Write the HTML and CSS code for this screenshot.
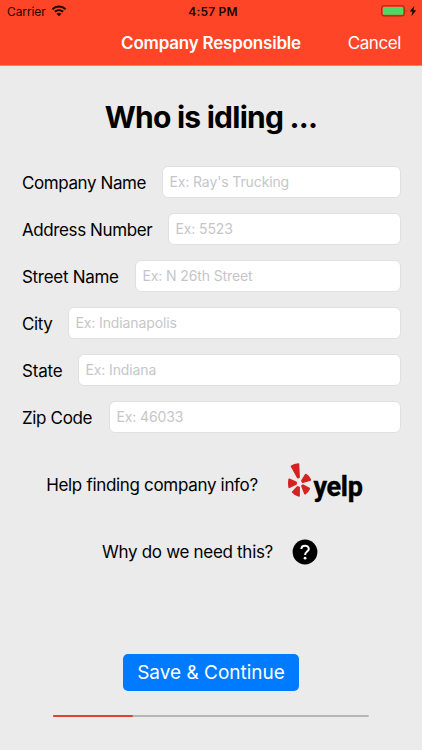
FILE: index.html
```html
<!DOCTYPE html>
<html lang="en">
<head>
    <meta charset="UTF-8">
    <meta name="viewport" content="width=device-width, initial-scale=1.0">
    <title>Company Responsible</title>
    <link rel="stylesheet" href="styles.css">
</head>
<body>
    <header class="top">
        <div class="status-bar">
            <div class="status-left">
                <span class="carrier">Carrier</span>
                <svg class="wifi" width="16" height="12" viewBox="0 0 16 12">
                    <path d="M1.4 4.2C5.2 0.6 10.8 0.6 14.6 4.2" fill="none" stroke="#1c0500" stroke-width="2.1"/>
                    <path d="M3.8 6.8C6.2 4.7 9.8 4.7 12.2 6.8" fill="none" stroke="#1c0500" stroke-width="2"/>
                    <path d="M5.5 8.7C7 7.4 9 7.4 10.5 8.7L8 11.2Z" fill="#1c0500"/>
                </svg>
            </div>
            <span class="time">4:57 PM</span>
            <div class="status-right">
                <svg width="36" height="12" viewBox="0 0 36 12">
                    <rect x="0.7" y="0.7" width="22.6" height="10.2" rx="2.4" fill="none" stroke="#a12d12" stroke-width="1.1"/>
                    <rect x="1.9" y="1.9" width="20.2" height="7.8" rx="1.2" fill="#4cd964"/>
                    <path d="M24.8 4Q26.2 5.8 24.8 7.6Z" fill="#a12d12"/>
                    <path d="M33.4 0.7L28.8 6.4H31.4L30.4 11.2L35.2 5.2H32.4Z" fill="#1c0500"/>
                </svg>
            </div>
        </div>
        <div class="nav-bar">
            <span class="nav-title">Company Responsible</span>
            <span class="nav-cancel">Cancel</span>
        </div>
    </header>

    <main class="content">
        <h1>Who is idling ...</h1>

        <form class="company-form">
            <div class="row">
                <label class="label-company" for="company">Company Name</label>
                <input id="company" type="text" placeholder="Ex: Ray's Trucking">
            </div>
            <div class="row">
                <label class="label-address" for="address">Address Number</label>
                <input id="address" type="text" placeholder="Ex: 5523">
            </div>
            <div class="row">
                <label class="label-street" for="street">Street Name</label>
                <input id="street" type="text" placeholder="Ex: N 26th Street">
            </div>
            <div class="row">
                <label class="label-city" for="city">City</label>
                <input id="city" type="text" placeholder="Ex: Indianapolis">
            </div>
            <div class="row">
                <label class="label-state" for="state">State</label>
                <input id="state" type="text" placeholder="Ex: Indiana">
            </div>
            <div class="row">
                <label class="label-zip" for="zip">Zip Code</label>
                <input id="zip" type="text" placeholder="Ex: 46033">
            </div>
        </form>

        <div class="help help-yelp">
            <span class="help-text help-text-yelp">Help finding company info?</span>
            <svg class="yelp" width="78" height="48" viewBox="0 0 78 48">
                <g fill="#d32323" stroke="#d32323" stroke-width="1.8" stroke-linejoin="round">
                    <path d="M3.6 5.2Q6.3 3.6 10.4 3.2L11 16.2L9.8 16.6Z"/>
                    <path d="M1.2 18.4L8 21.3V22.9L1.2 26.2Q0.4 22.3 1.2 18.4Z"/>
                    <path d="M9.4 26L11 26.4V34.8Q7.4 34.2 4.8 31.2Z"/>
                    <path d="M14 25L15 24.2L21.2 27.6Q19.8 31 17 32.6Z"/>
                    <path d="M14 19.8L17.7 13.6Q21 15.4 22.3 18.8L14.8 21.2Z"/>
                </g>
                <text class="yelp-text" x="25.4" y="35.3" textLength="49.5">yelp</text>
            </svg>
        </div>

        <div class="help help-why">
            <span class="help-text">Why do we need this?</span>
            <svg width="26" height="26" viewBox="0 0 26 26">
                <circle cx="13" cy="13" r="12.4" fill="#000"/>
                <path d="M9.4 10.1C9.4 5.6 16.8 5.7 16.8 9.9C16.8 12.6 13.1 12.6 13.1 15.9" fill="none" stroke="#fff" stroke-width="2"/>
                <circle cx="13.1" cy="19.2" r="1.4" fill="#fff"/>
            </svg>
        </div>

        <button class="save-btn" type="button">Save &amp; Continue</button>

        <div class="progress">
            <div class="progress-value" style="width: 25.3%"></div>
        </div>
    </main>
</body>
</html>
```
FILE: styles.css
```css
* {
    box-sizing: border-box;
    margin: 0;
    padding: 0;
    font-family: Inter, Roboto, sans-serif;
}

body {
    background-color: #ebebeb;
    height: 750px;
    overflow: hidden;
    color: #000;
}

.top {
    background-color: #ff4527;
    height: 66px;
    border-bottom: 1px solid #f3806d;
}

.status-bar {
    display: grid;
    grid-template-columns: 1fr auto 1fr;
    align-items: center;
    height: 22px;
    padding: 0 5px 0 7px;
    color: #1c0500;
}

.status-left {
    display: flex;
    align-items: center;
    gap: 5px;
}

.carrier {
    font-size: 12px;
    letter-spacing: -0.1px;
}

.time {
    font-size: 12px;
    font-weight: 600;
    letter-spacing: 0.2px;
    padding-left: 2px;
}

.status-right {
    display: flex;
    justify-content: flex-end;
}

.nav-bar {
    display: grid;
    grid-template-columns: 1fr auto 1fr;
    align-items: center;
    height: 42px;
    padding: 0 21px;
    color: #fff;
}

.nav-title {
    grid-column: 2;
    font-size: 17px;
    font-weight: 600;
    letter-spacing: -0.2px;
    white-space: nowrap;
}

.nav-cancel {
    font-size: 17px;
    letter-spacing: -0.4px;
    text-align: right;
}

.content {
    display: flex;
    flex-direction: column;
    align-items: center;
}

h1 {
    font-size: 30px;
    font-weight: 700;
    line-height: 36px;
    letter-spacing: -0.75px;
    margin-top: 33px;
}

.company-form {
    display: flex;
    flex-direction: column;
    gap: 15px;
    width: 100%;
    margin-top: 31px;
    padding: 0 21px 0 22px;
}

.row {
    display: flex;
    align-items: center;
    height: 32px;
}

label,
.help-text {
    font-size: 17px;
    letter-spacing: -0.4px;
    white-space: nowrap;
}

label {
    flex-shrink: 0;
    padding-top: 2px;
}

.label-company { width: 140px; }
.label-address { width: 146px; }
.label-street { width: 113px; letter-spacing: -0.3px; }
.label-city { width: 46px; }
.label-state { width: 56px; letter-spacing: -0.2px; }
.label-zip { width: 87px; letter-spacing: -0.35px; }

.row input {
    flex: 1;
    min-width: 0;
    height: 32px;
    padding: 0 6.5px 1px;
    background-color: #fff;
    border: 1px solid #e0e0e0;
    border-radius: 6px;
    font-size: 14px;
    letter-spacing: -0.12px;
    outline: none;
}

.row input::placeholder {
    color: #c6c6ca;
}

.help {
    display: flex;
    align-items: center;
}

.help-yelp {
    height: 42px;
    gap: 30px;
    margin-top: 31px;
    padding-right: 10px;
}

.help-text-yelp {
    letter-spacing: -0.32px;
}

.yelp {
    overflow: visible;
}

.yelp-text {
    font-family: Roboto, sans-serif;
    font-size: 27px;
    font-weight: 700;
    stroke: #000;
    stroke-width: 0.4px;
    stroke-linejoin: round;
}

.help-why {
    height: 26px;
    gap: 19px;
    margin-top: 33px;
    padding-right: 2px;
}

.help-why .help-text {
    letter-spacing: -0.3px;
}

.save-btn {
    width: 176px;
    height: 37px;
    margin-top: 89px;
    background-color: #007aff;
    border: none;
    border-radius: 5px;
    color: #fff;
    font-size: 19px;
}

.progress {
    width: 316px;
    height: 2px;
    margin-top: 24px;
    background-color: #b7b7b7;
    border-radius: 1px;
}

.progress-value {
    height: 2px;
    background-color: #e0432b;
    border-radius: 1px;
}
```
